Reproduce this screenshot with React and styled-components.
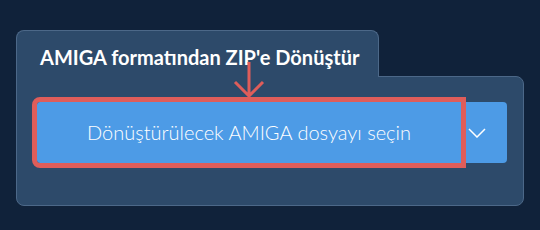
import React from "react";
import styled, { createGlobalStyle } from "styled-components";

const Global = createGlobalStyle`
  html, body {
    margin: 0;
    padding: 0;
    background: #10223a;
    font-family: Lato, "Noto Sans", sans-serif;
  }
`;

const Page = styled.div`
  width: 540px;
  height: 230px;
  padding: 30px 0 0 16px;
  box-sizing: border-box;
`;

const Card = styled.div`
  width: 508px;
  display: flex;
  flex-direction: column;
  align-items: flex-start;
`;

const Tab = styled.div`
  position: relative;
  z-index: 1;
  width: 363px;
  height: 47px;
  box-sizing: border-box;
  margin-bottom: -1px;
  padding: 14px 0 0 23px;
  background: #2d4a6a;
  border: 1px solid #4c6888;
  border-bottom: none;
  border-radius: 8px 8px 0 0;
  color: #ffffff;
  font-size: 20px;
  font-weight: 700;
`;

const Panel = styled.div`
  width: 508px;
  height: 130px;
  box-sizing: border-box;
  padding: 25px 15px 0 20px;
  background: #2d4a6a;
  border: 1px solid #4c6888;
  border-radius: 0 8px 8px 8px;
`;

const Group = styled.div`
  display: flex;
  height: 61px;
`;

const MainButton = styled.div`
  position: relative;
  width: 424px;
  display: flex;
  align-items: center;
  justify-content: center;
  background: #4d9be6;
  outline: 5px solid #df5d5a;
  border-radius: 3px 0 0 3px;
  color: #ffffff;
  font-size: 20px;
  font-weight: 300;
  padding-bottom: 2px;
  box-sizing: border-box;
`;

const Toggle = styled.div`
  width: 46px;
  display: flex;
  align-items: center;
  justify-content: center;
  padding-right: 14px;
  box-sizing: border-box;
  background: #4d9be6;
  border-radius: 0 4px 4px 0;
`;

const Pointer = styled.svg`
  position: absolute;
  z-index: 2;
  left: 196px;
  top: -40px;
`;

export default function App() {
  return (
    <Page>
      <Global />
      <Card>
        <Tab>AMIGA formatından ZIP'e Dönüştür</Tab>
        <Panel>
          <Group>
            <MainButton>
              Dönüştürülecek AMIGA dosyayı seçin
              <Pointer width="32" height="36" viewBox="0 0 32 36">
                <path
                  d="M16 0 V34 M2 20 L16 34 L30 20"
                  fill="none"
                  stroke="#df5d5a"
                  strokeWidth="3"
                />
              </Pointer>
            </MainButton>
            <Toggle>
              <svg width="18" height="10" viewBox="0 0 18 10">
                <path
                  d="M1 1 L9 9 L17 1"
                  fill="none"
                  stroke="#ffffff"
                  strokeWidth="1.5"
                />
              </svg>
            </Toggle>
          </Group>
        </Panel>
      </Card>
    </Page>
  );
}
